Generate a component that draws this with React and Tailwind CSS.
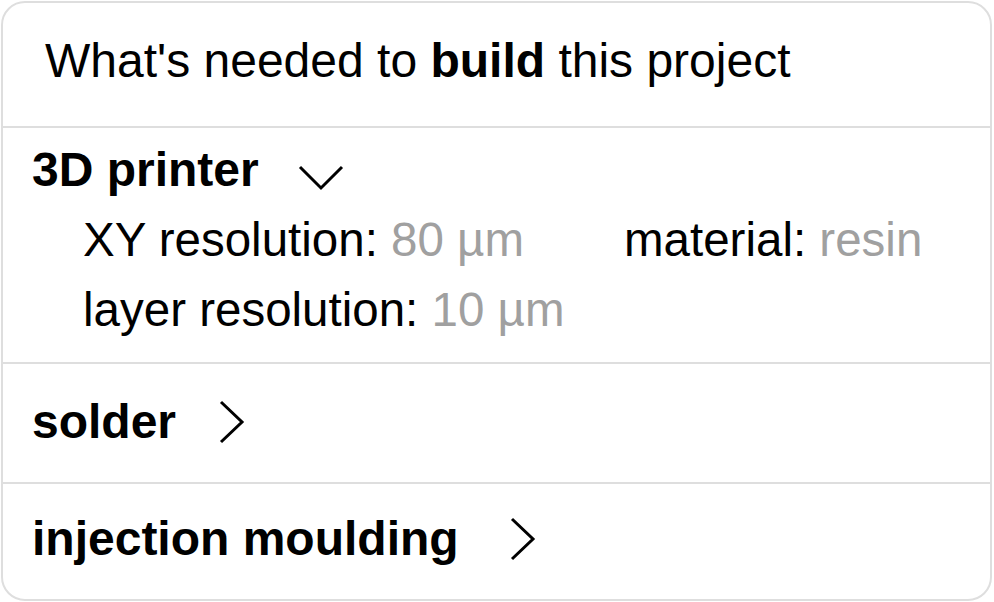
export default function App() {
  return (
    <div className="bg-white w-[994px] h-[602px] pt-[1px] pl-[1px]" style={{ fontFamily: '"Liberation Sans", Arial, sans-serif' }}>
      <div className="w-[991px] h-[600px] border-2 border-[#dedede] rounded-[24px] overflow-hidden text-black text-[48px]">
        <div className="pl-[42px] pt-[30px] pb-[37px] leading-[56px] border-b-2 border-[#dedede]">
          What's needed to <b>build</b> this project
        </div>

        <div className="pl-[29px] pt-[7px] pb-[17px] border-b-2 border-[#dedede]">
          <div className="flex items-center leading-[70px]">
            <span className="font-bold">3D printer</span>
            <svg width="46" height="26" viewBox="0 0 46 26" className="ml-[39px] mt-[16px]" fill="none" stroke="black" strokeWidth="3">
              <polyline points="2,2 23,23 44,2" />
            </svg>
          </div>
          <div className="ml-[51px] grid grid-cols-[541px_auto] leading-[70px] text-[47.5px]">
            <div>
              XY resolution: <span className="text-[#a0a0a0]">80 µm</span>
            </div>
            <div>
              material: <span className="text-[#a0a0a0]">resin</span>
            </div>
            <div>
              layer resolution: <span className="text-[#a0a0a0]">10 µm</span>
            </div>
          </div>
        </div>

        <div className="pl-[29px] pt-[30px] pb-[32px] border-b-2 border-[#dedede]">
          <div className="flex items-center leading-[56px]">
            <span className="font-bold">solder</span>
            <svg width="26" height="44" viewBox="0 0 26 44" className="ml-[43px]" fill="none" stroke="black" strokeWidth="3">
              <polyline points="2,2 23,22 2,42" />
            </svg>
          </div>
        </div>

        <div className="pl-[29px] pt-[27px]">
          <div className="flex items-center leading-[56px]">
            <span className="font-bold">injection moulding</span>
            <svg width="26" height="44" viewBox="0 0 26 44" className="ml-[51px]" fill="none" stroke="black" strokeWidth="3">
              <polyline points="2,2 23,22 2,42" />
            </svg>
          </div>
        </div>
      </div>
    </div>
  );
}
